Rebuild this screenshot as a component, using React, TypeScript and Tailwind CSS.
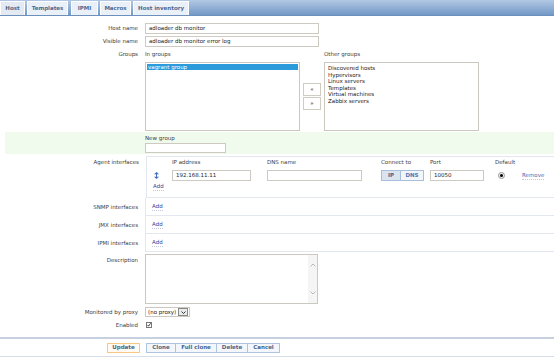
import React from "react"

const tabs = [
  { name: "Host", w: "w-[25px]", active: true },
  { name: "Templates", w: "w-[41px]" },
  { name: "IPMI", w: "w-[27px]" },
  { name: "Macros", w: "w-[31px]" },
  { name: "Host inventory", w: "w-[56px]" },
]

const otherGroups = [
  "Discovered hosts",
  "Hypervisors",
  "Linux servers",
  "Templates",
  "Virtual machines",
  "Zabbix servers",
]

const Label = ({ children, className = "" }: { children?: React.ReactNode; className?: string }) => (
  <div className={"w-[139px] shrink-0 text-right pr-[1px] " + className}>{children}</div>
)

const Input = ({ value = "", className = "" }: { value?: string; className?: string }) => (
  <div
    className={
      "border border-[#cdcac2] bg-white flex items-center px-[3px] text-[#222] " + className
    }
  >
    {value}
  </div>
)

const AddLink = () => (
  <span className="text-[#3c3f93] border-b border-dotted border-[#c4c7e2] leading-[7px]">Add</span>
)

const Btn = ({ children, className = "" }: { children: React.ReactNode; className?: string }) => (
  <div className={"h-full flex items-center justify-center font-bold text-[#4a6588] " + className}>
    {children}
  </div>
)

export default function App() {
  return (
    <div className="w-[554px] h-[360px] bg-white overflow-hidden font-['DejaVu_Sans',sans-serif] text-[5.5px] leading-[7px] text-[#3d3d3d]">
      {/* tabs */}
      <div className="h-[16px] bg-gradient-to-b from-[#b2c8e4] to-[#7299c6] flex items-end gap-[2px] border-b border-[#6c8fbb]">
        {tabs.map((t, i) => (
          <div
            key={t.name}
            className={
              t.w +
              " h-[14px] flex items-center justify-center font-bold border-t border-x border-white " +
              (t.active ? "bg-[#e4eaf2] text-[#52677f]" : "bg-[#eaf0f8] text-[#4a6a92]") +
              (i === 2 ? " ml-[1px]" : "")
            }
          >
            {t.name}
          </div>
        ))}
      </div>

      {/* host names */}
      <div className="mt-[7px] flex items-center h-[11px]">
        <Label>Host name</Label>
        <Input value="adloader db monitor" className="ml-[6px] w-[174px] h-[11px]" />
      </div>
      <div className="mt-[2px] flex items-center h-[11px]">
        <Label>Visible name</Label>
        <Input value="adloader db monitor error log" className="ml-[6px] w-[174px] h-[11px]" />
      </div>

      {/* groups */}
      <div className="mt-[3px] flex">
        <Label className="h-[8px] flex items-center justify-end">Groups</Label>
        <div className="ml-[6px] flex">
          <div className="flex flex-col w-[155px]">
            <div className="h-[8px] flex items-center">In groups</div>
            <div className="mt-[4px] h-[69px] border border-[#cbc8bf] bg-white p-[1px]">
              <div className="bg-[#2b9bdc] text-white h-[6px] flex items-center px-[1px] leading-[6px]">
                vagrant group
              </div>
            </div>
          </div>
          <div className="flex flex-col justify-center gap-[1px] mx-[3px] pt-[12px]">
            <div className="w-[18px] h-[13px] border border-[#cfccc4] bg-white flex items-center justify-center text-[#444]">
              «
            </div>
            <div className="w-[18px] h-[13px] border border-[#cfccc4] bg-white flex items-center justify-center text-[#444]">
              »
            </div>
          </div>
          <div className="flex flex-col w-[155px]">
            <div className="h-[8px] flex items-center">Other groups</div>
            <div className="mt-[4px] h-[69px] border border-[#cbc8bf] bg-white px-[3px] py-[2px] text-[#222] leading-[6.6px]">
              {otherGroups.map((g) => (
                <div key={g}>{g}</div>
              ))}
            </div>
          </div>
        </div>
      </div>

      {/* new group */}
      <div className="mt-[1px] ml-[5px] h-[22px] bg-[#f0fbee] flex">
        <div className="w-[134px] shrink-0" />
        <div className="ml-[6px] pt-[2px] flex flex-col">
          <div className="h-[8px] flex items-center">New group</div>
          <Input className="mt-[1px] w-[81px] h-[10px]" />
        </div>
      </div>

      {/* agent interfaces */}
      <div className="mt-[2px] flex">
        <Label className="pt-[3px] h-[8px] box-content">Agent interfaces</Label>
        <div className="ml-[6px] flex-1 h-[42px] border-l border-t border-b border-[#e3e7f0] flex flex-col">
          <div className="h-[10px] flex items-center relative">
            <span className="absolute left-[25px]">IP address</span>
            <span className="absolute left-[120px]">DNS name</span>
            <span className="absolute left-[234px]">Connect to</span>
            <span className="absolute left-[283px]">Port</span>
            <span className="absolute left-[348px]">Default</span>
          </div>
          <div className="mt-[3px] h-[11px] flex items-center">
            <div className="w-[25px] pl-[7px]">
              <svg width="5" height="7" viewBox="0 0 5 7" className="block">
                <path d="M2.5 0 L5 2.2 H0 Z M2.5 7 L5 4.8 H0 Z" fill="#3d70b6" />
                <rect x="2" y="2" width="1" height="3" fill="#3d70b6" />
              </svg>
            </div>
            <Input value="192.168.11.11" className="w-[79px] h-[11px]" />
            <Input className="ml-[16px] w-[95px] h-[11px]" />
            <div className="ml-[19px] w-[43px] h-[11px] border border-[#a8bfdc] flex">
              <Btn className="w-[19px] bg-[#dae4ef] border-r border-[#a8bfdc] text-[#3a5a85]">IP</Btn>
              <Btn className="flex-1 bg-[#f2f6fb] text-[#4d79b0]">DNS</Btn>
            </div>
            <Input value="10050" className="ml-[6px] w-[54px] h-[11px]" />
            <div className="ml-[14px] w-[7px] h-[7px] rounded-full border border-[#9a9a9a] bg-[#eee] flex items-center justify-center">
              <div className="w-[3px] h-[3px] rounded-full bg-black" />
            </div>
            <span className="ml-[17px] text-[#5a5fa6] border-b border-dotted border-[#c2c4e0] leading-[7px]">
              Remove
            </span>
          </div>
          <div className="mt-[2px] h-[8px] pl-[6px] flex items-center">
            <AddLink />
          </div>
        </div>
      </div>

      {["SNMP interfaces", "JMX interfaces", "IPMI interfaces"].map((l) => (
        <div key={l} className="flex h-[18px]">
          <Label className="flex items-center justify-end">{l}</Label>
          <div className="ml-[6px] flex-1 border-l border-b border-[#e3e7f0] pl-[6px] flex items-center">
            <AddLink />
          </div>
        </div>
      ))}

      {/* description */}
      <div className="mt-[2px] flex">
        <Label className="pt-[3px]">Description</Label>
        <div className="ml-[6px] w-[173px] h-[50px] border border-[#cbc8bf] bg-white flex justify-end">
          <div className="w-[9px] h-full bg-[#f5f5f5] flex flex-col items-center justify-between py-[8px]">
            <svg width="6" height="4" viewBox="0 0 6 4">
              <path d="M0.5 3.5 L3 1 L5.5 3.5" fill="none" stroke="#aaa" strokeWidth="0.8" />
            </svg>
            <svg width="6" height="4" viewBox="0 0 6 4">
              <path d="M0.5 0.5 L3 3 L5.5 0.5" fill="none" stroke="#aaa" strokeWidth="0.8" />
            </svg>
          </div>
        </div>
      </div>

      {/* proxy */}
      <div className="mt-[3px] flex items-center h-[10px]">
        <Label>Monitored by proxy</Label>
        <div className="ml-[6px] w-[45px] h-[10px] border border-[#cbc8bf] bg-white flex items-center pl-[2px] text-[#222]">
          <span className="flex-1">(no proxy)</span>
          <div className="w-[10px] h-[8px] mr-[1px] border border-[#888] bg-[#eaeaea] flex items-center justify-center">
            <svg width="5" height="3" viewBox="0 0 5 3">
              <path d="M0.5 0.5 L2.5 2.5 L4.5 0.5" fill="none" stroke="#222" strokeWidth="0.9" />
            </svg>
          </div>
        </div>
      </div>

      {/* enabled */}
      <div className="mt-[4px] flex items-center h-[8px]">
        <Label>Enabled</Label>
        <div className="ml-[7px] w-[6px] h-[6px] border border-[#777] bg-white flex items-center justify-center">
          <svg width="6" height="6" viewBox="0 0 6 6">
            <path d="M0.8 3 L2.3 4.8 L5.5 0.3" fill="none" stroke="#000" strokeWidth="1.1" />
          </svg>
        </div>
      </div>

      {/* footer */}
      <div className="mt-[8px] border-t-2 border-b border-t-[#c6d0de] border-b-[#d8dee8] h-[20px] flex items-center">
        <div className="ml-[107px] w-[33px] h-[10px] border border-[#f6c985] bg-[#fffaf2]">
          <Btn>Update</Btn>
        </div>
        <div className="ml-[6px] h-[10px] border border-[#aec3de] bg-[#f3f7fc] flex">
          <Btn className="w-[29px] border-r border-[#aec3de]">Clone</Btn>
          <Btn className="w-[41px] border-r border-[#aec3de]">Full clone</Btn>
          <Btn className="w-[31px] border-r border-[#aec3de]">Delete</Btn>
          <Btn className="w-[31px]">Cancel</Btn>
        </div>
      </div>
    </div>
  )
}
